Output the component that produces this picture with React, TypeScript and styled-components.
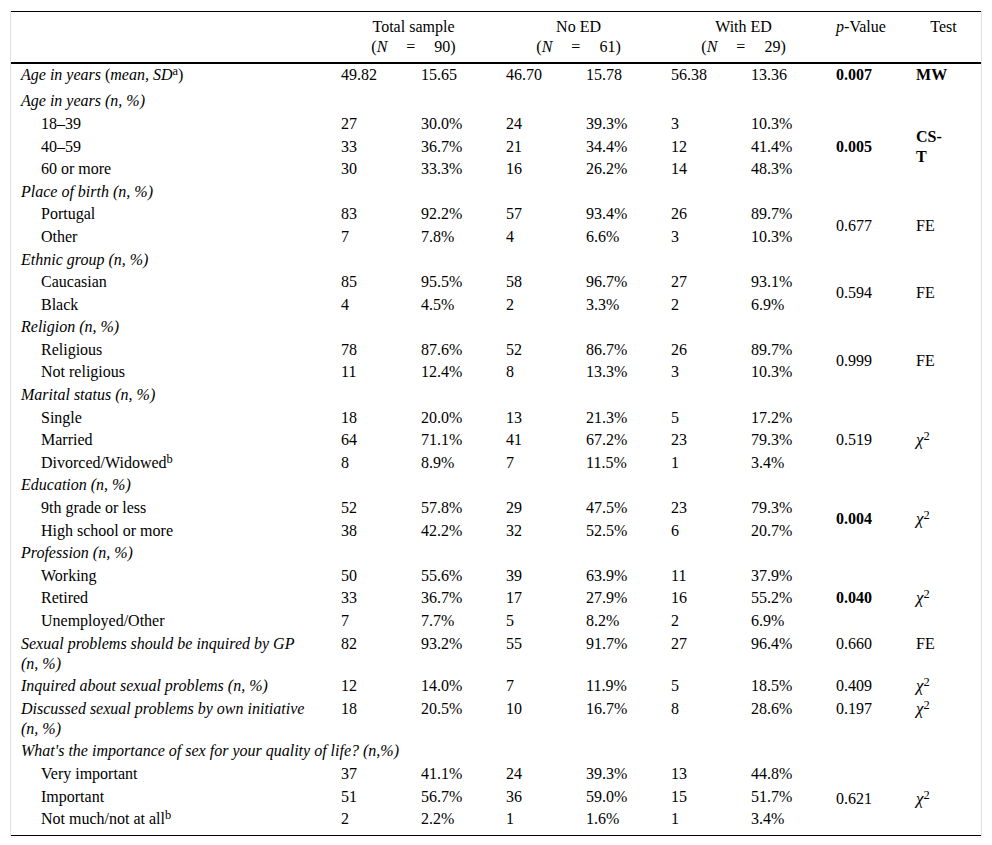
import React, { Fragment } from "react";
import styled, { createGlobalStyle } from "styled-components";

const GlobalStyle = createGlobalStyle`
  body {
    margin: 0;
    background: #fff;
    color: #000;
    font-family: "Liberation Serif", "Times New Roman", serif;
    font-size: 16px;
  }
`;

const Frame = styled.div`
  box-sizing: border-box;
  width: 972px;
  margin: 11px 0 0 10px;
  border-left: 1px solid #e2e2e2;
  border-right: 1px solid #e2e2e2;
`;

const Table = styled.table`
  width: 970px;
  table-layout: fixed;
  border-collapse: collapse;
  border-top: 1px solid #000;
  border-bottom: 1px solid #000;
  line-height: 20px;

  tbody tr:first-child td {
    padding-bottom: 4.75px;
  }
  tbody tr:last-child td {
    padding-bottom: 6px;
  }
`;

const Head = styled.th<{ $left?: boolean }>`
  font-weight: normal;
  text-align: ${(p) => (p.$left ? "left" : "center")};
  vertical-align: top;
  padding: 5px 10px 5px;
  border-bottom: 2px solid #000;
`;

const NLine = styled.div`
  display: flex;
  justify-content: center;
  gap: 19px;
`;

const Cell = styled.td<{ $indent?: boolean; $bold?: boolean; $middle?: boolean }>`
  padding: 1.3px 10px 1.3px ${(p) => (p.$indent ? "30px" : "10px")};
  vertical-align: ${(p) => (p.$middle ? "middle" : "top")};
  font-weight: ${(p) => (p.$bold ? "bold" : "normal")};
  text-align: left;
`;

const TestCell = styled(Cell)`
  padding-right: 33px;
`;

const Label = styled.span`
  font-style: italic;
`;

const Sup = styled.sup`
  font-size: 78%;
  line-height: 0;
  vertical-align: 0.42em;
  font-style: normal;
`;

const ChiMark = styled.span`
  font-style: italic;
  font-size: 17px;
`;

const Chi = () => (
  <span>
    <ChiMark>χ</ChiMark>
    <Sup>2</Sup>
  </span>
);

interface Item {
  label: React.ReactNode;
  v: string[];
}

interface Block {
  head?: React.ReactNode;
  items: Item[];
  p: string;
  test: React.ReactNode;
  strong?: boolean;
  testStrong?: boolean;
}

// "(n, %)" is kept together so it drops to the next line as a whole
const NP = "(n,\u00a0%)";

const blocks: Block[] = [
  {
    items: [
      {
        label: (
          <>
            <Label>Age in years</Label> (<Label>mean, SD</Label>
            <Sup>a</Sup>)
          </>
        ),
        v: ["49.82", "15.65", "46.70", "15.78", "56.38", "13.36"]
      }
    ],
    p: "0.007",
    test: "MW",
    strong: true,
    testStrong: true
  },
  {
    head: "Age in years (n, %)",
    items: [
      { label: "18–39", v: ["27", "30.0%", "24", "39.3%", "3", "10.3%"] },
      { label: "40–59", v: ["33", "36.7%", "21", "34.4%", "12", "41.4%"] },
      { label: "60 or more", v: ["30", "33.3%", "16", "26.2%", "14", "48.3%"] }
    ],
    p: "0.005",
    test: "CS-T",
    strong: true,
    testStrong: true
  },
  {
    head: "Place of birth (n, %)",
    items: [
      { label: "Portugal", v: ["83", "92.2%", "57", "93.4%", "26", "89.7%"] },
      { label: "Other", v: ["7", "7.8%", "4", "6.6%", "3", "10.3%"] }
    ],
    p: "0.677",
    test: "FE"
  },
  {
    head: "Ethnic group (n, %)",
    items: [
      { label: "Caucasian", v: ["85", "95.5%", "58", "96.7%", "27", "93.1%"] },
      { label: "Black", v: ["4", "4.5%", "2", "3.3%", "2", "6.9%"] }
    ],
    p: "0.594",
    test: "FE"
  },
  {
    head: "Religion (n, %)",
    items: [
      { label: "Religious", v: ["78", "87.6%", "52", "86.7%", "26", "89.7%"] },
      { label: "Not religious", v: ["11", "12.4%", "8", "13.3%", "3", "10.3%"] }
    ],
    p: "0.999",
    test: "FE"
  },
  {
    head: "Marital status (n, %)",
    items: [
      { label: "Single", v: ["18", "20.0%", "13", "21.3%", "5", "17.2%"] },
      { label: "Married", v: ["64", "71.1%", "41", "67.2%", "23", "79.3%"] },
      {
        label: (
          <>
            Divorced/Widowed<Sup>b</Sup>
          </>
        ),
        v: ["8", "8.9%", "7", "11.5%", "1", "3.4%"]
      }
    ],
    p: "0.519",
    test: <Chi />
  },
  {
    head: "Education (n, %)",
    items: [
      { label: "9th grade or less", v: ["52", "57.8%", "29", "47.5%", "23", "79.3%"] },
      { label: "High school or more", v: ["38", "42.2%", "32", "52.5%", "6", "20.7%"] }
    ],
    p: "0.004",
    test: <Chi />,
    strong: true
  },
  {
    head: "Profession (n, %)",
    items: [
      { label: "Working", v: ["50", "55.6%", "39", "63.9%", "11", "37.9%"] },
      { label: "Retired", v: ["33", "36.7%", "17", "27.9%", "16", "55.2%"] },
      { label: "Unemployed/Other", v: ["7", "7.7%", "5", "8.2%", "2", "6.9%"] }
    ],
    p: "0.040",
    test: <Chi />,
    strong: true
  },
  {
    items: [
      {
        label: <Label>Sexual problems should be inquired by GP {NP}</Label>,
        v: ["82", "93.2%", "55", "91.7%", "27", "96.4%"]
      }
    ],
    p: "0.660",
    test: "FE"
  },
  {
    items: [
      {
        label: <Label>Inquired about sexual problems {NP}</Label>,
        v: ["12", "14.0%", "7", "11.9%", "5", "18.5%"]
      }
    ],
    p: "0.409",
    test: <Chi />
  },
  {
    items: [
      {
        label: <Label>Discussed sexual problems by own initiative {NP}</Label>,
        v: ["18", "20.5%", "10", "16.7%", "8", "28.6%"]
      }
    ],
    p: "0.197",
    test: <Chi />
  },
  {
    head: "What's the importance of sex for your quality of life? (n,%)",
    items: [
      { label: "Very important", v: ["37", "41.1%", "24", "39.3%", "13", "44.8%"] },
      { label: "Important", v: ["51", "56.7%", "36", "59.0%", "15", "51.7%"] },
      {
        label: (
          <>
            Not much/not at all<Sup>b</Sup>
          </>
        ),
        v: ["2", "2.2%", "1", "1.6%", "1", "3.4%"]
      }
    ],
    p: "0.621",
    test: <Chi />
  }
];

const widths = [320, 80, 85, 80, 85, 80, 85, 80, 75];

function GroupHead({ title, n }: { title: string; n: string }) {
  return (
    <Head colSpan={2}>
      {title}
      <NLine>
        <span>
          (<i>N</i>
        </span>
        <span>=</span>
        <span>{n})</span>
      </NLine>
    </Head>
  );
}

export default function App() {
  return (
    <>
      <GlobalStyle />
      <Frame>
        <Table>
          <colgroup>
            {widths.map((w, i) => (
              <col key={i} style={{ width: w }} />
            ))}
          </colgroup>
          <thead>
            <tr>
              <Head />
              <GroupHead title="Total sample" n="90" />
              <GroupHead title="No ED" n="61" />
              <GroupHead title="With ED" n="29" />
              <Head $left>
                <i>p</i>-Value
              </Head>
              <Head>Test</Head>
            </tr>
          </thead>
          <tbody>
            {blocks.map((b, bi) => (
              <Fragment key={bi}>
                {b.head && (
                  <tr>
                    <Cell colSpan={9}>
                      <Label>{b.head}</Label>
                    </Cell>
                  </tr>
                )}
                {b.items.map((it, i) => (
                  <tr key={i}>
                    <Cell $indent={!!b.head}>{it.label}</Cell>
                    {it.v.map((x, j) => (
                      <Cell key={j}>{x}</Cell>
                    ))}
                    {i === 0 && (
                      <>
                        <Cell rowSpan={b.items.length} $middle={b.items.length > 1} $bold={b.strong}>
                          {b.p}
                        </Cell>
                        <TestCell rowSpan={b.items.length} $middle={b.items.length > 1} $bold={b.testStrong}>
                          {b.test}
                        </TestCell>
                      </>
                    )}
                  </tr>
                ))}
              </Fragment>
            ))}
          </tbody>
        </Table>
      </Frame>
    </>
  );
}
